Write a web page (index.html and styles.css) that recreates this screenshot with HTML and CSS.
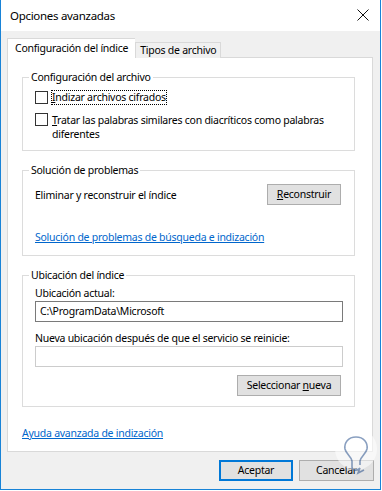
FILE: index.html
```html
<!DOCTYPE html>
<html lang="es">
<head>
    <meta charset="UTF-8">
    <meta name="viewport" content="width=device-width, initial-scale=1.0">
    <title>Opciones avanzadas</title>
    <link rel="stylesheet" href="styles.css">
</head>
<body>
    <div class="window">
        <div class="titlebar">
            <span class="title">Opciones avanzadas</span>
            <svg class="close" width="12" height="12" viewBox="0 0 12 12">
                <path d="M0.5 0.5 L11.5 11.5 M11.5 0.5 L0.5 11.5" stroke="#111" stroke-width="1" fill="none"/>
            </svg>
        </div>

        <div class="client">
            <div class="tabs">
                <div class="tab active">Configuración del índice</div>
                <div class="tab">Tipos de archivo</div>
            </div>

            <div class="panel">
                <div class="group group-first">
                    <div class="legend">Configuración del archivo</div>
                    <div class="check-row">
                        <span class="box"></span>
                        <span class="focus access">Indizar archivos cifrados</span>
                    </div>
                    <div class="check-row check-row-wrap">
                        <span class="box"></span>
                        <span class="label access">Tratar las palabras similares con diacríticos como palabras diferentes</span>
                    </div>
                </div>

                <div class="group">
                    <div class="legend">Solución de problemas</div>
                    <div class="rebuild-row">
                        <span>Eliminar y reconstruir el índice</span>
                        <button class="btn btn-rebuild"><span class="access">Reconstruir</span></button>
                    </div>
                    <a class="link link-trouble" href="#">Solución de problemas de búsqueda e indización</a>
                </div>

                <div class="group">
                    <div class="legend">Ubicación del índice</div>
                    <div class="field-label">Ubicación actual:</div>
                    <div class="field">C:\ProgramData\Microsoft</div>
                    <div class="field-label field-label-second">Nueva ubicación después de que el servicio se reinicie:</div>
                    <div class="field field-disabled"></div>
                    <div class="select-row">
                        <button class="btn btn-select">Seleccionar <u>n</u>ueva</button>
                    </div>
                </div>

                <a class="link link-help" href="#">Ayuda avanzada de indización</a>
            </div>

            <div class="footer">
                <button class="btn btn-default">Aceptar</button>
                <button class="btn btn-cancel">Cancelar
                    <svg class="mark" width="44" height="56" viewBox="0 0 44 56">
                        <circle cx="22" cy="22" r="21" fill="rgba(255,255,255,0.55)"/>
                        <path d="M22 10 C14 10 10 16 11 22 C12 27 17 29 18 34 L18 40 C18 44 24 44 26 41 L24 46 L30 43" stroke="rgba(40,80,140,0.55)" stroke-width="1.6" fill="none"/>
                        <path d="M22 10 C30 10 34 16 33 22 C32 27 27 29 26 34 L26 38" stroke="rgba(40,80,140,0.55)" stroke-width="1.6" fill="none"/>
                    </svg>
                </button>
            </div>
        </div>
    </div>
</body>
</html>
```

FILE: styles.css
```css
* {
    box-sizing: border-box;
}
body {
    margin: 0;
    background: #ffffff;
    font-family: "Noto Sans", "Open Sans", sans-serif;
    font-size: 10.5px;
    letter-spacing: -0.25px;
    color: #000;
}
.window {
    width: 381px;
    height: 490px;
    border: 1px solid #1883d7;
    border-top: none;
    display: flex;
    flex-direction: column;
}
.titlebar {
    height: 31px;
    background: #fff;
    display: flex;
    align-items: center;
    justify-content: space-between;
    padding: 0 9px 1px 9px;
}
.title {
    font-size: 11.5px;
    letter-spacing: -0.3px;
}
.close {
    margin-right: 2px;
}
.client {
    flex: 1;
    background: #f0f0f0;
    padding: 7px 6px 0 6px;
    display: flex;
    flex-direction: column;
}
.tabs {
    display: flex;
    align-items: flex-end;
    height: 20px;
    position: relative;
    z-index: 1;
}
.tab {
    height: 16px;
    line-height: 14px;
    padding: 0 4px 0 4px;
    border: 1px solid #d9d9d9;
    border-bottom: none;
    background: #f0f0f0;
    white-space: nowrap;
}
.tab.active {
    height: 20px;
    line-height: 18px;
    background: #fff;
    padding: 0 7px 0 7px;
    border-right: none;
}
.panel {
    width: 366px;
    height: 395px;
    margin-top: -1px;
    background: #fff;
    border: 1px solid #d9d9d9;
    padding: 19px 17px 0 14px;
}
.group {
    border: 1px solid #dcdcdc;
    padding: 0 12px 10px 12px;
    margin-bottom: 19px;
}
.legend {
    margin-top: -8px;
    margin-left: -6px;
    padding: 0 2px;
    background: #fff;
    width: fit-content;
    line-height: 15px;
}
.group-first {
    padding-bottom: 9px;
}
.check-row {
    display: flex;
    align-items: flex-start;
    line-height: 15px;
    margin-top: 5px;
}
.check-row-wrap {
    margin-top: 8px;
    line-height: 14px;
}
.box {
    flex: none;
    width: 13px;
    height: 13px;
    border: 1px solid #333;
    background: #fff;
    margin: 1px 3px 0 0;
}
.check-row-wrap .box {
    margin-top: 0;
}
.focus {
    outline: 1px dotted #000;
    outline-offset: -1px;
    padding: 0 1px;
}
.access {
    display: inline-block;
}
.access::first-letter {
    text-decoration: underline;
}
.label {
    padding-left: 1px;
}
.rebuild-row {
    display: flex;
    align-items: center;
    justify-content: space-between;
    margin-top: 6px;
    padding-right: 1px;
}
.btn {
    font-family: inherit;
    font-size: 10.5px;
    letter-spacing: -0.25px;
    height: 21px;
    padding: 0;
    background: #e1e1e1;
    border: 1px solid #adadad;
    color: #000;
    line-height: 17px;
}
.btn-rebuild {
    width: 74px;
}
.link {
    color: #0066cc;
    text-decoration: underline;
    display: block;
    width: fit-content;
    line-height: 15px;
}
.link-trouble {
    margin-top: 25px;
}
.field-label {
    margin-top: 3px;
    line-height: 15px;
}
.field-label-second {
    margin-top: 9px;
}
.field {
    height: 21px;
    border: 1px solid #7a7a7a;
    background: #fff;
    padding: 0 4px;
    line-height: 19px;
    margin-right: -1px;
}
.field-disabled {
    border-color: #cccccc;
}
.select-row {
    display: flex;
    justify-content: flex-end;
    margin-top: 8px;
    padding-right: 1px;
}
.btn-select {
    width: 104px;
}
.link-help {
    margin-left: 0;
    margin-top: 0;
}
.footer {
    display: flex;
    justify-content: flex-end;
    gap: 6px;
    padding: 8px 0 0 0;
}
.btn-default {
    width: 74px;
    height: 21px;
    border: 2px solid #0078d7;
}
.btn-cancel {
    width: 75px;
    position: relative;
}
.mark {
    position: absolute;
    left: 34px;
    top: -34px;
}
```
